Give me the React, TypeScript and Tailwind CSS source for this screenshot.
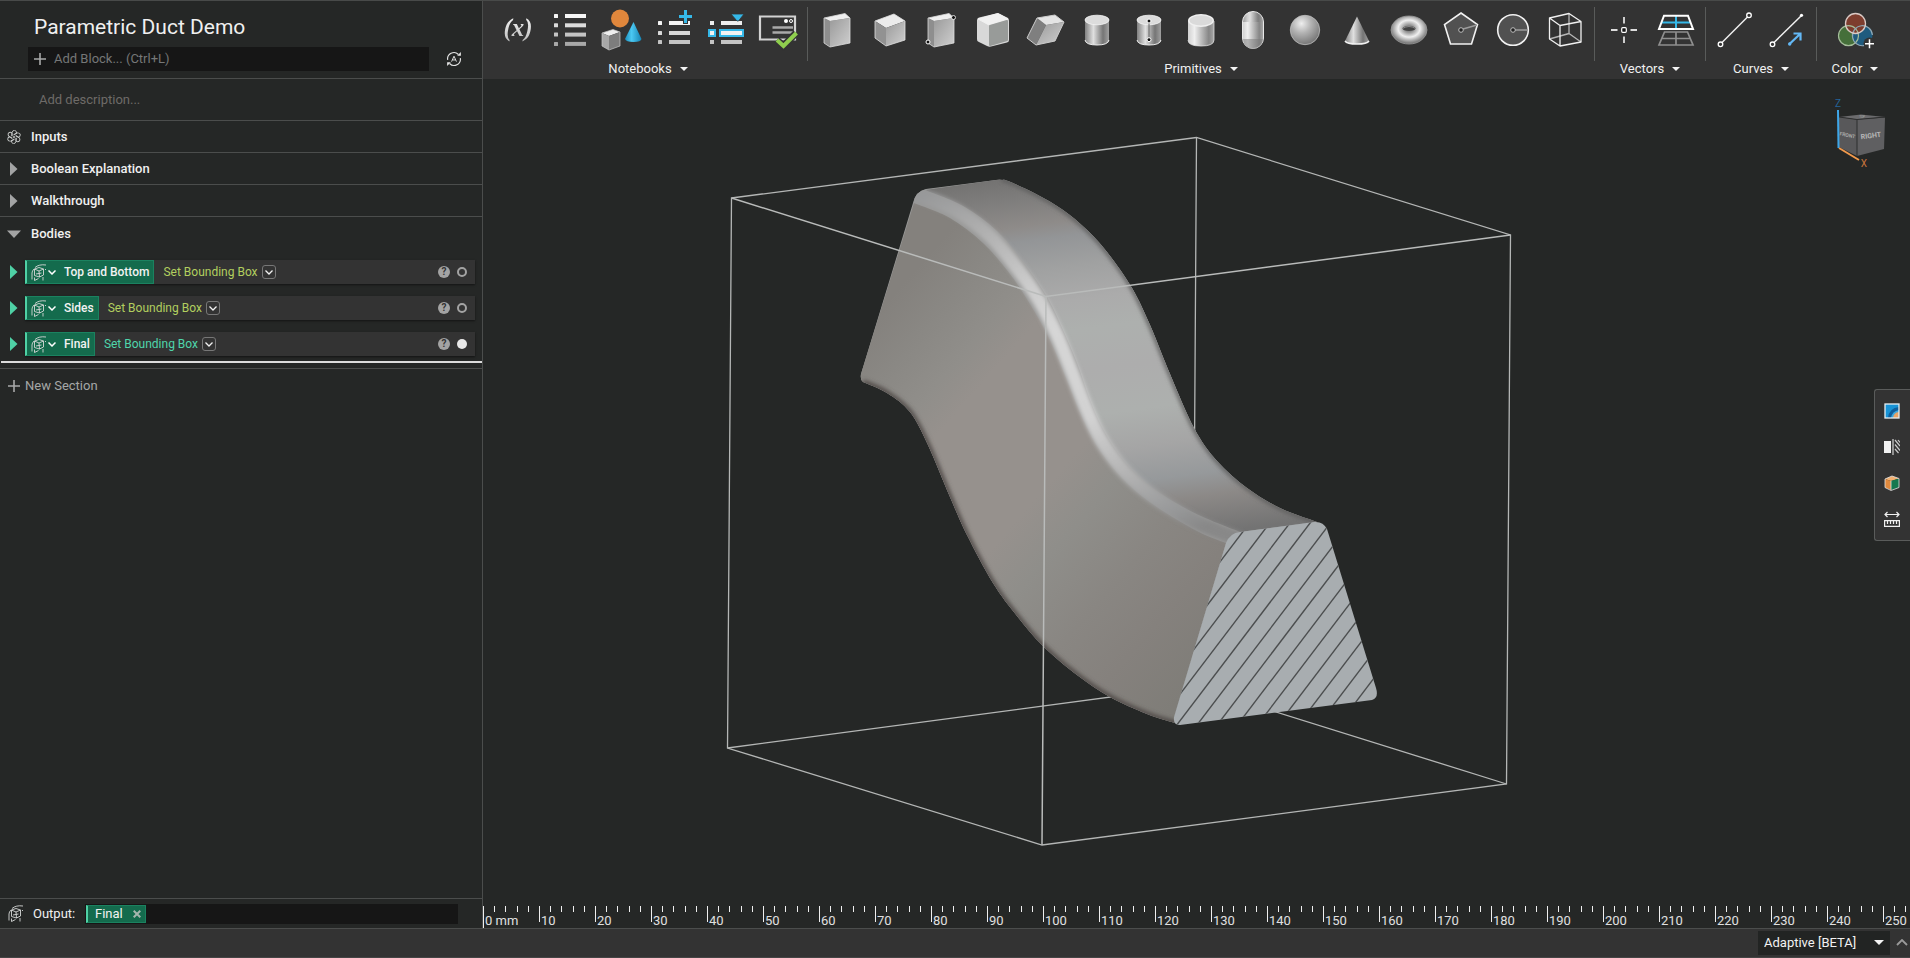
import React from "react";

type Pt = [number, number];

/* Smooth open curve through a list of points (Catmull-Rom to Bezier). */
function curve(points: Pt[], start = "M"): string {
  let d = `${start}${points[0][0]} ${points[0][1]}`;
  for (let i = 0; i < points.length - 1; i++) {
    const p0 = points[i - 1] ?? points[i];
    const p1 = points[i];
    const p2 = points[i + 1];
    const p3 = points[i + 2] ?? p2;
    d += `C${p1[0] + (p2[0] - p0[0]) / 6} ${p1[1] + (p2[1] - p0[1]) / 6} ${p2[0] - (p3[0] - p1[0]) / 6} ${p2[1] - (p3[1] - p1[1]) / 6} ${p2[0]} ${p2[1]}`;
  }
  return d;
}

/* ---------- Duct geometry ---------- */

const rightEdge: Pt[] = [[1002, 180], [1008, 181], [1036, 194], [1063, 210], [1086, 229], [1107, 252], [1132, 288], [1150, 325], [1170, 374], [1194, 428], [1217, 461], [1247, 488], [1280, 508], [1317, 522]];
const bottomEdge: Pt[] = [[863, 382], [887, 393], [910, 412], [928, 445], [950, 497], [967, 535], [993, 583], [1017, 616], [1043, 646], [1077, 675], [1110, 697], [1147, 714], [1178, 724]];
const bevelUpper: Pt[] = [[925, 190], [963, 206], [997, 231], [1024, 263], [1047, 297], [1063, 330], [1077, 363], [1090, 400], [1104, 431], [1124, 461], [1150, 486], [1183, 507], [1210, 520], [1240, 532]];
const bevelLower: Pt[] = [[914, 203], [950, 218], [983, 243], [1010, 274], [1030, 304], [1050, 340], [1067, 380], [1083, 419], [1101, 452], [1127, 483], [1157, 507], [1197, 531], [1226, 543]];
const bevelMid: Pt[] = [[908, 193], [925, 197], [957, 211], [990, 236], [1017, 268], [1039, 300], [1057, 335], [1072, 372], [1087, 410], [1102, 441], [1125, 472], [1154, 497], [1190, 519], [1220, 532], [1240, 539]];

const topFace = `${curve(bevelUpper)}L1317 522${curve([...rightEdge].reverse(), "L")}Q1000 179 996 180Z`;
const sideFace = `${curve(bevelLower)}L1174 718L1178 725${curve([...bottomEdge].reverse(), "L")}Q860 380 861 374Z`;
const bodyOutline = `M861 374L913 203Q916 191 926 189L996 180Q1001 179 1008 181${curve(rightEdge, "L")}L1240 533L1226 545L1174 718L1178 725${curve([...bottomEdge].reverse(), "L")}Q860 380 861 374Z`;
const sectionFace = "M1226 543Q1230 533 1240 532L1314 522Q1323 521 1327 529L1376 688Q1379 698 1372 700L1180 725Q1173 725 1174 717Z";

function Viewport() {
  return (
    <svg viewBox="483 79 1427 820" className="h-full w-full" role="img" aria-label="Parametric duct">
      <defs>
        <linearGradient id="top" gradientUnits="userSpaceOnUse" x1="1000" y1="180" x2="1049" y2="554">
          <stop offset="0" stopColor="#747372" />
          <stop offset=".06" stopColor="#7f7e7d" />
          <stop offset=".13" stopColor="#8e8b89" />
          <stop offset=".17" stopColor="#939597" />
          <stop offset=".25" stopColor="#a0a1a1" />
          <stop offset=".34" stopColor="#ababab" />
          <stop offset=".42" stopColor="#adb0ae" />
          <stop offset=".53" stopColor="#adadad" />
          <stop offset=".65" stopColor="#adb0ae" />
          <stop offset=".75" stopColor="#a5a5a5" />
          <stop offset=".84" stopColor="#96999b" />
          <stop offset=".9" stopColor="#8c8987" />
          <stop offset="1" stopColor="#737373" />
        </linearGradient>
        <linearGradient id="side" gradientUnits="userSpaceOnUse" x1="880" y1="310" x2="1242" y2="629">
          <stop offset="0" stopColor="#84817d" />
          <stop offset=".1" stopColor="#8a8884" />
          <stop offset=".19" stopColor="#908e8a" />
          <stop offset=".26" stopColor="#96918d" />
          <stop offset=".5" stopColor="#96918d" />
          <stop offset=".6" stopColor="#8f8e8a" />
          <stop offset=".74" stopColor="#898682" />
          <stop offset=".86" stopColor="#85817d" />
          <stop offset="1" stopColor="#7f7d78" />
        </linearGradient>
        <linearGradient id="bevel" gradientUnits="userSpaceOnUse" x1="960" y1="180" x2="1130" y2="560">
          <stop offset="0" stopColor="#98999a" />
          <stop offset=".12" stopColor="#adadad" />
          <stop offset=".3" stopColor="#cccccc" />
          <stop offset=".42" stopColor="#d6d6d6" />
          <stop offset=".65" stopColor="#d2d2d2" />
          <stop offset=".8" stopColor="#b5b5b5" />
          <stop offset=".93" stopColor="#98999a" />
          <stop offset="1" stopColor="#888888" />
        </linearGradient>
        <filter id="soft" x="-10%" y="-10%" width="120%" height="120%"><feGaussianBlur stdDeviation="2" /></filter>
        <clipPath id="bodyClip"><path d={bodyOutline} /></clipPath>
        <clipPath id="sectionClip"><path d={sectionFace} /></clipPath>
      </defs>

      <g stroke="#b4b6b5" strokeWidth="1.3" fill="none">
        <path d="M731.500 198L1196.500 137.500L1510.500 235L1506.500 784L1042 845L727.500 748Z" />
        <path d="M1196.500 137.500L1193 686M727.500 748L1193 686L1506.500 784" />
      </g>

      <path d={bodyOutline} fill="#989897" />
      <path d={topFace} fill="url(#top)" />
      <path d={sideFace} fill="url(#side)" />
      <g clipPath="url(#bodyClip)">
        <path d={curve(bevelMid)} fill="none" stroke="url(#bevel)" strokeWidth="14" filter="url(#soft)" />
        <path d={curve(rightEdge)} fill="none" stroke="#5c5c5b" strokeWidth="4" filter="url(#soft)" />
        <path d={curve(bottomEdge)} fill="none" stroke="#4f4a46" strokeWidth="5" filter="url(#soft)" />
      </g>

      <path d={sectionFace} fill="#a8adb0" />
      <g clipPath="url(#sectionClip)" stroke="#4c4e4f" strokeWidth="1.4">
        {Array.from({ length: 13 }, (_, n) => (
          <line key={n} x1={1254.300 + 20.2 * n} y1="516.700" x2={1094.700 + 20.2 * n} y2="726.700" />
        ))}
      </g>

      <path d="M731.500 198L1046 296.500L1510.500 235M1046 296.500L1042 845" stroke="#b9bbba" strokeWidth="1.5" fill="none" />
    </svg>
  );
}

function NavCube() {
  return (
    <svg viewBox="0 0 56 74" className="h-[74px] w-[56px]" role="img" aria-label="View orientation">
      <path d="M6 21L28 18.500L52 21L24 23.500Z" fill="#6b6b6d" />
      <path d="M6 21L24 23.500V60L6 51Z" fill="#58585a" />
      <path d="M24 23.500L52 21.500L51 53L24 60Z" fill="#5f5f61" />
      <path d="M6 21L24 23.500L52 21M24 23.500V60" stroke="#2d2e2e" fill="none" />
      <path d="M5 14L5.500 52" stroke="#3ea6e8" strokeWidth="2" />
      <path d="M6 52L26 64" stroke="#f19a4d" strokeWidth="2" />
      <g fontFamily="Roboto, sans-serif" textAnchor="middle">
        <text x="5" y="11" fontSize="10" fill="#23659a">Z</text>
        <text x="31" y="71" fontSize="10" fill="#c8743c">X</text>
        <text x="14.500" y="41" fontSize="5" fontWeight="bold" fill="#a8a8a8" transform="rotate(12 15 39)">FRONT</text>
        <text x="38" y="42" fontSize="7" fontWeight="bold" fill="#b8b8b8" transform="rotate(-7 38 40)">RIGHT</text>
        <text x="29" y="22" fontSize="3" fill="#aaaaaa">TOP</text>
      </g>
    </svg>
  );
}

/* ---------- Toolbar icons, drawn on a 52 x 52 field ---------- */

function Icon({ children }: { children: React.ReactNode }) {
  return (
    <svg viewBox="0 0 52 52" className="h-[52px] w-[52px]" fill="none" aria-hidden="true">
      {children}
    </svg>
  );
}

const Block = () => (
  <>
    <path d="M13 14L19 17V43L13 39Z" fill="#8e8e8e" />
    <path d="M19 17L39 14V39L19 43Z" fill="url(#gDiag)" />
    <path d="M13 14L34 9.500L39 14L19 17Z" fill="#efefef" />
    <path d="M13 14L34 9.500L39 14V39L19 43L13 39Z" stroke="#dcdcdc" strokeWidth=".8" />
  </>
);

const Cylinder = () => (
  <>
    <path d="M14 15V37Q15 41 26 41T38 37V15Z" fill="url(#gCyl)" />
    <path d="M14 36Q15 41 26 41T38 36" stroke="#eeeeee" />
    <ellipse cx="26" cy="16" rx="12" ry="4.800" fill="#dcdcdc" stroke="#f4f4f4" strokeWidth=".8" />
  </>
);

const icons: Record<string, React.ReactNode> = {
  List: (
    <>
      {["#f6f6f6", "#dcdcdc", "#c4c4c4", "#a8a8a8"].map((c, i) => (
        <g key={c} fill={c}>
          <rect x="10" y={10 + i * 9.300} width="4" height="4" rx=".5" />
          <rect x="21" y={10 + i * 9.300} width="21" height="4" />
        </g>
      ))}
    </>
  ),
  Shapes: (
    <>
      <circle cx="24" cy="14.500" r="9" fill="#e0873c" />
      <path d="M37.500 18L45.500 35Q45 38 37.500 38T29 35Z" fill="url(#gBlue)" />
      <path d="M6 29L17 25.500L24 28L13 32Z" fill="#eeeeee" />
      <path d="M6 29L13 32V46L6 42Z" fill="#a8a8a8" />
      <path d="M13 32L24 28V42L13 46Z" fill="#7d7d7d" />
      <path d="M6 29L17 25.500L24 28V42L13 46L6 42Z" stroke="#c9c9c9" strokeWidth=".7" />
    </>
  ),
  "Add to list": (
    <>
      {[17, 27, 36].map((y, i) => (
        <g key={y} fill={["#f4f4f4", "#d8d8d8", "#c4c4c4"][i]}>
          <rect x="10" y={y} width="4" height="4" rx=".5" />
          <rect x="21" y={y} width="21" height="4" />
        </g>
      ))}
      <path d="M30 13H45M37.500 5.500V20" stroke="#333333" strokeWidth="5" />
      <path d="M31 12.500H44M37.500 6V19" stroke="#35b8e8" strokeWidth="3" />
    </>
  ),
  "List item": (
    <>
      <path d="M10 17h4v4h-4zM21 17h21v4H21z" fill="#eeeeee" />
      <path d="M10 36h4v4h-4zM21 36h21v4H21z" fill="#c4c4c4" />
      <path d="M9 26h6v6H9zM20 26h23v6H20z" fill="#f2f2f2" stroke="#35b8e8" strokeWidth="2" />
      <path d="M31 10H44L38.500 17H37Z" fill="#35b8e8" stroke="#333333" strokeWidth=".8" />
    </>
  ),
  "Notebook check": (
    <>
      <path d="M8 12.500H43V35.500H8Z" stroke="#d2d2d2" strokeWidth="2.200" />
      <circle cx="34" cy="17" r="2" fill="#ffffff" />
      <circle cx="39" cy="17" r="1.500" stroke="#ffffff" />
      <path d="M20.500 23.500H41M20.500 28.500H41" stroke="#a9a9a9" strokeWidth="2.400" />
      <path d="M25 36L31.500 42L44 29" stroke="#333333" strokeWidth="7" />
      <path d="M25 36L31.500 42L44.500 29" stroke="#8fce4e" strokeWidth="4" />
    </>
  ),
  Block: <Block />,
  Cube: (
    <>
      <path d="M12 17L31 10L42 17L23 24Z" fill="#ececec" />
      <path d="M12 17L23 24V42L12 34Z" fill="#929292" />
      <path d="M23 24L42 17V36L23 42Z" fill="url(#gDiag)" />
      <path d="M12 17L31 10L42 17V36L23 42L12 34Z" stroke="#e2e2e2" strokeWidth=".8" />
    </>
  ),
  "Block from corners": (
    <>
      <Block />
      <circle cx="38.500" cy="13.500" r="2" fill="#111111" stroke="#ffffff" strokeWidth=".8" />
      <circle cx="13" cy="38" r="2" fill="#111111" stroke="#ffffff" />
    </>
  ),
  "Rounded block": (
    <>
      <path d="M10 16Q10 14 12 13.500L29 9.500Q31 9 33 10L41 14Q42 15 42 17V36Q42 38 40 38.500L24 42.500Q22 43 20 42L11 37.500Q10 37 10 35Z" fill="#d8d8d8" />
      <path d="M11 15L31 9.500L41 15L22 21Z" fill="#f1f1f1" stroke="#f1f1f1" strokeLinejoin="round" />
      <path d="M23 22L40 17V36L23 41Z" fill="#989b99" stroke="#989b99" strokeLinejoin="round" strokeWidth="2" />
    </>
  ),
  Parallelepiped: (
    <>
      <path d="M18 14L27 21L17 41L8 34Z" fill="#7f7f7f" />
      <path d="M27 21L45 18L36 37L17 41Z" fill="url(#gDiag)" />
      <path d="M18 14L36 11L45 18L27 21Z" fill="#e4e4e4" />
      <path d="M18 14L36 11L45 18L36 37L17 41L8 34Z" stroke="#cccccc" />
    </>
  ),
  Cylinder: <Cylinder />,
  "Cylinder from points": (
    <>
      <Cylinder />
      <path d="M26 17V36" stroke="#666666" />
      <circle cx="26" cy="17" r="2" fill="#111111" stroke="#ffffff" />
      <circle cx="26" cy="35.700" r="2" fill="#111111" stroke="#ffffff" />
    </>
  ),
  "Rounded cylinder": (
    <>
      <path d="M13 17V36Q13 42 26 42T39 36V17Z" fill="url(#gCylSoft)" />
      <ellipse cx="26" cy="16.500" rx="13" ry="6.500" fill="#f0f0f0" />
      <ellipse cx="26" cy="16.500" rx="11.500" ry="5" fill="#dadada" />
      <path d="M13 36Q13 42 26 42T39 36V17" stroke="#dcdcdc" strokeWidth=".8" />
    </>
  ),
  Capsule: (
    <>
      <rect x="15.500" y="7.500" width="21" height="37" rx="10.500" fill="url(#gCylSoft)" stroke="#e8e8e8" />
      <path d="M16 18A10 10 0 0 1 36 18Z" fill="url(#gCyl)" opacity=".65" />
      <path d="M16 35A10 10 0 0 0 36 35Z" fill="#777777" opacity=".5" />
    </>
  ),
  Sphere: <circle cx="26" cy="26" r="14.700" fill="url(#gBall)" stroke="#bdbdbd" strokeWidth=".8" />,
  Cone: (
    <>
      <path d="M26 12.500L38 37Q36 40 26 40T14 37Z" fill="url(#gCyl)" />
      <path d="M14 37Q16 40 26 40T38 37" stroke="#f2f2f2" strokeWidth="1.500" />
    </>
  ),
  Torus: (
    <>
      <ellipse cx="26" cy="26" rx="18" ry="14" fill="url(#gRing)" stroke="#9a9a9a" strokeWidth=".8" />
      <ellipse cx="26" cy="24.500" rx="6.500" ry="2.600" fill="#444444" />
      <path d="M19.500 24.500Q26 20.500 32.500 24.500" stroke="#8a8a8a" />
    </>
  ),
  Polygon: (
    <>
      <path d="M26 9L42.500 20.500L36.500 40H15.500L9.500 20.500Z" fill="#515151" stroke="#f1f1f1" strokeWidth="1.600" />
      <path d="M28 25L42 21" stroke="#9c9c9c" strokeWidth="1.500" />
      <circle cx="26" cy="26" r="2.300" fill="#222222" stroke="#bdbdbd" />
    </>
  ),
  Disk: (
    <>
      <circle cx="26" cy="26" r="15.300" fill="#515151" stroke="#f1f1f1" strokeWidth="1.600" />
      <path d="M28 26H41" stroke="#9c9c9c" strokeWidth="1.500" />
      <circle cx="26" cy="26" r="2.300" fill="#222222" stroke="#bdbdbd" />
    </>
  ),
  "Wire box": (
    <g strokeWidth="1.300" strokeLinejoin="round">
      <path d="M10.500 35L30 29.500V9.500M30 29.500L42 38" stroke="#b5b5b5" />
      <path d="M10.500 14L30 9.500L42 17.500L21 21.500ZM10.500 14V35L21 42V21.500M21 42L42 38V17.500" stroke="#f1f1f1" />
    </g>
  ),
  Point: (
    <>
      <path d="M13 26H19.500M32.500 26H39M26 13V19.500M26 32.500V39" stroke="#dddddd" strokeWidth="1.800" />
      <rect x="23.700" y="23.700" width="4.600" height="4.600" rx="1" stroke="#ffffff" strokeWidth="1.200" fill="#161616" />
    </>
  ),
  Plane: (
    <>
      <path d="M14.500 28H37.500L43 41H9Z M26 28V41M12 34.500H40" stroke="#8f8f8f" strokeWidth="1.700" />
      <path d="M26 12V25M11.500 18.500H40.500" stroke="#35b8e8" strokeWidth="2" />
      <path d="M14 11.700H38L43 25H9Z" stroke="#ffffff" strokeWidth="2" />
    </>
  ),
  Line: (
    <>
      <path d="M13 38.500L38.500 13" stroke="#f2f2f2" strokeWidth="1.500" />
      <circle cx="11.500" cy="40.300" r="2.300" stroke="#ffffff" strokeWidth="1.300" />
      <circle cx="40" cy="11.300" r="2.300" stroke="#ffffff" strokeWidth="1.300" />
    </>
  ),
  "Line direction": (
    <>
      <path d="M13 38.500L40 12" stroke="#f2f2f2" strokeWidth="1.500" />
      <circle cx="11.500" cy="40.300" r="2.300" stroke="#ffffff" strokeWidth="1.300" />
      <circle cx="40.500" cy="11.300" r="1.600" fill="#ffffff" />
      <path d="M28.500 40L39 30M32.500 29.500H39.500V36.500" stroke="#63b8f5" strokeWidth="2.200" />
      <circle cx="28.700" cy="40" r="1.700" fill="#63b8f5" />
    </>
  ),
  "Color mix": (
    <>
      <circle cx="19.500" cy="31.700" r="10" fill="#456f3a" />
      <circle cx="33.500" cy="31.700" r="10" fill="#1f5b7e" />
      <circle cx="26.500" cy="19.500" r="10" fill="#7d3d2e" />
      <circle cx="40.500" cy="39.500" r="6" fill="#333333" />
      <circle cx="19.500" cy="31.700" r="10" stroke="#a5bd9a" strokeWidth="1.200" />
      <path d="M35 41.600A10 10 0 1 1 43.400 31" stroke="#8fa9b8" strokeWidth="1.200" />
      <circle cx="26.500" cy="19.500" r="10" stroke="#d9c9c4" strokeWidth="1.300" />
      <path d="M36 39.700H45M40.500 35.200V44.200" stroke="#ffffff" strokeWidth="1.500" />
    </>
  ),
};

const groups = [
  { name: "Notebooks", tools: ["Variable", "List", "Shapes", "Add to list", "List item", "Notebook check"] },
  {
    name: "Primitives",
    tools: ["Block", "Cube", "Block from corners", "Rounded block", "Parallelepiped", "Cylinder", "Cylinder from points", "Rounded cylinder", "Capsule", "Sphere", "Cone", "Torus", "Polygon", "Disk", "Wire box"],
  },
  { name: "Vectors", tools: ["Point", "Plane"] },
  { name: "Curves", tools: ["Line", "Line direction"] },
  { name: "Color", tools: ["Color mix"] },
];

function Toolbar() {
  return (
    <header className="flex h-[78px] shrink-0 overflow-hidden bg-[#333333] pl-[9px]">
      <svg className="absolute h-0 w-0" aria-hidden="true">
        <defs>
          <linearGradient id="gDiag" x1="0" y1="0" x2="1" y2="1">
            <stop offset="0" stopColor="#9a9a9a" />
            <stop offset="1" stopColor="#cfcfcf" />
          </linearGradient>
          <linearGradient id="gCyl" x1="0" y1="0" x2="1" y2="0">
            <stop offset="0" stopColor="#808080" />
            <stop offset=".35" stopColor="#e0e0e0" />
            <stop offset=".75" stopColor="#757575" />
            <stop offset="1" stopColor="#a0a0a0" />
          </linearGradient>
          <linearGradient id="gCylSoft" x1="0" y1="0" x2="1" y2="0">
            <stop offset="0" stopColor="#d0d0d0" />
            <stop offset=".25" stopColor="#efefef" />
            <stop offset=".8" stopColor="#868686" />
            <stop offset="1" stopColor="#a8a8a8" />
          </linearGradient>
          <linearGradient id="gBlue" x1="0" y1="0" x2="1" y2="0">
            <stop offset="0" stopColor="#1b8fbd" />
            <stop offset=".4" stopColor="#4bc8f2" />
            <stop offset="1" stopColor="#1684b4" />
          </linearGradient>
          <radialGradient id="gBall" cx=".38" cy=".28" r=".8">
            <stop offset="0" stopColor="#eeeeee" />
            <stop offset=".4" stopColor="#b4b4b4" />
            <stop offset="1" stopColor="#6c6c6c" />
          </radialGradient>
          <radialGradient id="gRing" cx=".5" cy=".45" r=".55">
            <stop offset=".2" stopColor="#8a8a8a" />
            <stop offset=".55" stopColor="#f0f0f0" />
            <stop offset="1" stopColor="#6a6a6a" />
          </radialGradient>
        </defs>
      </svg>
      {groups.map((group, i) => (
        <React.Fragment key={group.name}>
          {i > 0 && <div className="mx-[3px] mt-[6px] h-[54px] w-px shrink-0 bg-[#595b5a]" />}
          <section className={group.name === "Color" ? "flex shrink-0 flex-col items-center px-[9px] pt-[3px]" : "flex shrink-0 flex-col items-center pt-[3px]"}>
            <div className="flex">
              {group.tools.map((tool) => (
                <button key={tool} type="button" aria-label={tool} className="flex h-[52px] w-[52px] items-center justify-center hover:bg-white/5">
                  {tool === "Variable" ? (
                    <span className="bg-gradient-to-b from-white to-[#b0b0b0] bg-clip-text px-1 pb-1 font-['Liberation_Serif',serif] text-[25px] leading-8 font-bold text-transparent italic">
                      (x)
                    </span>
                  ) : (
                    <Icon>{icons[tool]}</Icon>
                  )}
                </button>
              ))}
            </div>
            <button type="button" className="mt-1 flex h-[18px] items-center gap-2 text-[13px] text-[#f0f0f0]">
              {group.name}
              <svg viewBox="0 0 8 4" className="h-1 w-2" aria-hidden="true"><path d="M0 0H8L4 4Z" fill="#f4f4f4" /></svg>
            </button>
          </section>
        </React.Fragment>
      ))}
    </header>
  );
}

/* ---------- Sidebar ---------- */

function BodyIcon() {
  return (
    <svg viewBox="0 0 16 17" className="h-[17px] w-4 shrink-0" fill="none" stroke="#d6d8d7" strokeWidth=".9" aria-hidden="true">
      <path d="M3.500 5L8 3.500L12.500 5V11L8.500 13L3.500 11.500ZM3.500 5L8 7L12.500 5M8 7L8.500 13M5 10L10.500 9" />
      <path d="M4 3.500Q8 0 15 1M1 9V15.500M3.500 13.500V16.500L7.500 14.500M12 13V16.500M14.500 5V6M3 5Q1 7 1 9" />
    </svg>
  );
}

function Triangle({ tone, open }: { tone: "gray" | "teal"; open?: boolean }) {
  return (
    <svg viewBox="0 0 14 14" className="h-[14px] w-[14px] shrink-0" aria-hidden="true">
      <path d={open ? "M0 3.500H14L7 11Z" : "M3 0L10.500 7L3 14Z"} className={tone === "teal" ? "fill-[#4fd1a5]" : "fill-[#a3a4a4]"} />
    </svg>
  );
}

function KnotIcon() {
  return (
    <svg viewBox="0 0 14 14" className="h-[14px] w-[14px] shrink-0" fill="none" stroke="#c9cbca" strokeWidth=".9" aria-hidden="true">
      {[0, 60, 120, 180, 240, 300].map((a) => (
        <path key={a} transform={`rotate(${a} 7 7)`} d="M5 6V2.500Q5.500 .3 7.700 .3Q9.800 1 9.500 3.200L6.500 4.800" />
      ))}
      <circle cx="7" cy="7" r=".8" />
    </svg>
  );
}

function SectionRow({ title, open, knot }: { title: string; open?: boolean; knot?: boolean }) {
  return (
    <button type="button" className="flex h-8 w-full shrink-0 items-center gap-[10px] border-b border-[#4b4d4c] px-[7px] pt-px text-left text-[13px] font-medium text-[#f0f0f0] last:border-b-0">
      {knot ? <KnotIcon /> : <Triangle tone="gray" open={open} />}
      {title}
    </button>
  );
}

function BlockRow({ name, lime, active }: { name: string; lime?: boolean; active?: boolean }) {
  return (
    <li className="flex h-6 items-center pr-[7px] pl-[7px]">
      <button type="button" aria-label={`Expand ${name}`} className="mr-1 flex"><Triangle tone="teal" /></button>
      <div className="flex h-6 min-w-0 flex-1 items-center bg-[#333333] shadow-[0_1px_2px_rgba(0,0,0,0.5)]">
        <div className="flex h-6 items-center border border-l-2 border-[#1b8260] border-l-[#4fd1a5] bg-[#146b4d] pr-1 pl-1">
          <BodyIcon />
          <svg viewBox="0 0 8 5" className="mr-2 ml-px h-[5px] w-2" fill="none" stroke="#ffffff" strokeWidth="1.500" aria-hidden="true"><path d="M.5 .5L4 4L7.500 .5" /></svg>
          <span className="text-[12px] font-medium text-[#f2f2f2]">{name}</span>
        </div>
        <span className={lime ? "ml-[9px] text-[12px] text-[#b2cf5f]" : "ml-[9px] text-[12px] text-[#4fd6ab]"}>Set Bounding Box</span>
        <button type="button" aria-label={`${name} options`} className="ml-1 flex h-[14px] w-[14px] items-center justify-center rounded-[3px] border border-[#777777]">
          <svg viewBox="0 0 8 5" className="h-[5px] w-2" fill="none" stroke="#f2f2f2" strokeWidth="1.300" aria-hidden="true"><path d="M.5 .5L4 4L7.500 .5" /></svg>
        </button>
        <button type="button" aria-label={`Help for ${name}`} className="mr-[7px] ml-auto flex h-3 w-3 items-center justify-center rounded-full bg-[#a3a3a3] text-[10px] leading-3 font-bold text-[#333333]">?</button>
        <button type="button" aria-label={`Show ${name}`} className={active ? "mr-2 h-[10px] w-[10px] rounded-full bg-[#e8e8e8]" : "mr-2 h-[10px] w-[10px] rounded-full border-2 border-[#a3a3a3]"} />
      </div>
    </li>
  );
}

function PlusIcon() {
  return (
    <svg viewBox="0 0 12 12" className="h-3 w-3 shrink-0" aria-hidden="true"><path d="M6 0V12M0 6H12" stroke="#a8a9a9" strokeWidth="1.600" /></svg>
  );
}

function Sidebar() {
  return (
    <aside className="flex w-[483px] shrink-0 flex-col border-r border-[#4b4d4c]">
      <div className="h-[78px] shrink-0 border-b border-[#4b4d4c] pt-[10px] pl-7">
        <h1 className="pl-[6px] text-[21px] leading-8 text-[#f0f0f0]">Parametric Duct Demo</h1>
        <div className="mt-1 flex h-6 items-center pr-5">
          <label className="flex h-6 flex-1 items-center gap-2 bg-[#161616] pl-[6px]">
            <PlusIcon />
            <input aria-label="Add block" placeholder="Add Block... (Ctrl+L)" className="min-w-0 flex-1 bg-transparent text-[13px] text-white outline-none placeholder:text-[#757777]" />
          </label>
          <button type="button" aria-label="Automatic update" className="ml-[17px]">
            <svg viewBox="0 0 17 16" className="h-4 w-4" fill="none" stroke="#e6e6e6" strokeWidth="1.200" aria-hidden="true">
              <path d="M1.800 9A6.700 6.700 0 0 1 13.200 3.200M15.200 7A6.700 6.700 0 0 1 3.800 12.800" />
              <path d="M5.900 10.800L8.500 5L11.100 10.800M6.900 9H10.100" strokeWidth="1" />
              <path d="M15.800 .6V4.500H11.900ZM1.200 15.400V11.500H5.100Z" fill="#e6e6e6" stroke="none" />
            </svg>
          </button>
        </div>
      </div>
      <div className="flex h-[42px] shrink-0 items-center border-b border-[#4b4d4c] px-[39px]">
        <input aria-label="Description" placeholder="Add description..." className="w-full bg-transparent text-[13px] text-white outline-none placeholder:text-[#6e6b68]" />
      </div>
      <div className="flex shrink-0 flex-col">
        <SectionRow title="Inputs" knot />
        <SectionRow title="Boolean Explanation" />
        <SectionRow title="Walkthrough" />
        <SectionRow title="Bodies" open />
      </div>
      <ul className="flex flex-col gap-3 pt-[11px]">
        <BlockRow name="Top and Bottom" lime />
        <BlockRow name="Sides" lime />
        <BlockRow name="Final" active />
      </ul>
      <div className="mt-[5px] ml-px h-[2px] shrink-0 bg-[#dcdcdc]" />
      <div className="mt-[5px] border-t border-[#4b4d4c]">
        <button type="button" className="flex h-8 items-center gap-[5px] pt-px pl-2 text-[13px] text-[#a6a7a7]"><PlusIcon />New Section</button>
      </div>
      <footer className="mt-auto flex h-[30px] shrink-0 items-center border-t border-[#4b4d4c] pr-6 pl-2">
        <BodyIcon />
        <span className="ml-[9px] w-[52px] text-[13px] text-[#f0f0f0]">Output:</span>
        <div className="flex h-5 flex-1 items-center bg-[#161616] pl-px">
          <span className="flex h-[18px] items-center gap-[10px] border border-l-2 border-[#1b8260] border-l-[#4fd1a5] bg-[#146b4d] pr-1 pl-[7px] text-[13px] text-[#f2f2f2]">
            Final
            <button type="button" aria-label="Remove Final" className="flex">
              <svg viewBox="0 0 8 8" className="h-2 w-2" aria-hidden="true"><path d="M.7 .7L7.300 7.300M7.300 .7L.7 7.300" stroke="#a5b5ae" strokeWidth="2" /></svg>
            </button>
          </span>
        </div>
      </footer>
    </aside>
  );
}

/* ---------- Viewport furniture ---------- */

function Ruler() {
  return (
    <div className="flex h-[22px] overflow-hidden">
      {Array.from({ length: 26 }, (_, i) => (
        <div key={i} className="flex w-[56px] shrink-0">
          <div className={i === 0 ? "h-[22px] w-px bg-[#eeeeee]" : "h-4 w-px bg-[#eeeeee]"} />
          <div className="flex-1">
            <div className="flex h-[6px] justify-evenly">
              {[1, 2, 3, 4].map((t) => <div key={t} className="h-[6px] w-px bg-[#eeeeee]" />)}
            </div>
            <div className="pl-px text-[13px] leading-[17px] whitespace-nowrap text-[#e0e0e0]">{i === 0 ? "0 mm" : i * 10}</div>
          </div>
        </div>
      ))}
    </div>
  );
}

const viewTools: { name: string; art: React.ReactNode }[] = [
  {
    name: "Field colors",
    art: (
      <>
        <rect x="1" y="1" width="14" height="14" fill="#1793d6" />
        <path d="M15 4Q5 5 4 15H15Z" fill="#0d5f9e" />
        <path d="M15 7Q8 8 7 15H15Z" fill="#3ba7df" />
        <path d="M15 9Q9.500 9.500 9 15H15Z" fill="#e8a468" />
        <rect x="1" y="1" width="14" height="14" fill="none" stroke="#e6eef2" strokeWidth="1.300" />
      </>
    ),
  },
  {
    name: "Section view",
    art: (
      <>
        <path d="M0 2H7V14H0Z" fill="#f2f2f2" />
        <path d="M9 0V16" stroke="#f2f2f2" />
        <path d="M11 1L16 7M11 5.500L16 11.500M11 10L14.500 14M14 1L16 3.500" stroke="#c8c8c8" strokeWidth="1.200" />
      </>
    ),
  },
  {
    name: "Body display",
    art: (
      <>
        <path d="M1 4L8 1L15 3.500L7 6Z" fill="#f2b070" />
        <path d="M1 4L7 6V15L1 12.500Z" fill="#e08a3e" />
        <path d="M7 6L15 3.500V12.500L7 15Z" fill="#15784f" />
        <path d="M1 4L8 1L15 3.500V12.500L7 15.500L1 12.500ZM7 6V15" fill="none" stroke="#e4e4e4" strokeWidth=".8" />
      </>
    ),
  },
  {
    name: "Measure",
    art: (
      <g fill="none" stroke="#f0f0f0" strokeWidth="1.200">
        <path d="M1 3.500H15M3.500 1L1 3.500L3.500 6M12.500 1L15 3.500L12.500 6" />
        <path d="M.6 9.600H15.400V15.400H.6ZM3.500 10V13M6.500 10V13M9.500 10V13M12.500 10V13" />
      </g>
    ),
  },
];

export default function App() {
  return (
    <div className="flex h-screen flex-col overflow-hidden border-t border-[#484a49] bg-[#252726] font-[Roboto,sans-serif] text-[#f0f0f0]">
      <div className="flex min-h-0 flex-1">
        <Sidebar />
        <div className="flex min-w-0 flex-1 flex-col">
          <Toolbar />
          <main className="relative flex min-h-0 flex-1 flex-col">
            <div className="min-h-0 flex-1">
              <Viewport />
            </div>
            <div className="pt-[7px]">
              <Ruler />
            </div>
            <div className="absolute top-[17px] right-[21px]">
              <NavCube />
            </div>
            <nav className="absolute top-[310px] right-0 flex flex-col rounded-l-[3px] border border-r-0 border-[#5a5c5b] bg-[#333333] py-[3px] pr-px">
              {viewTools.map((tool) => (
                <button key={tool.name} type="button" aria-label={tool.name} className="flex h-9 w-[34px] items-center justify-center">
                  <svg viewBox="0 0 16 16" className="h-4 w-4" aria-hidden="true">{tool.art}</svg>
                </button>
              ))}
            </nav>
          </main>
        </div>
      </div>
      <footer className="flex h-[30px] shrink-0 items-start justify-end border-t border-b border-t-[#4b4d4c] border-b-[#454545] bg-[#333333] pt-px">
        <div className="relative h-6 w-[132px]">
          <select aria-label="Rendering quality" className="h-6 w-full appearance-none bg-[#222423] pl-[6px] text-[13px] text-[#f2f2f2] outline-none">
            <option>Adaptive [BETA]</option>
          </select>
          <svg viewBox="0 0 10 5" className="pointer-events-none absolute top-[10px] right-[6px] h-[5px] w-[10px]" aria-hidden="true"><path d="M0 0H10L5 5Z" fill="#f4f4f4" /></svg>
        </div>
        <button type="button" aria-label="Expand panel" className="flex h-6 w-5 items-center justify-center">
          <svg viewBox="0 0 12 7" className="ml-1 h-[7px] w-3" fill="none" stroke="#9a9a9a" strokeWidth="1.800" aria-hidden="true"><path d="M1 6L6 1L11 6" /></svg>
        </button>
      </footer>
    </div>
  );
}
